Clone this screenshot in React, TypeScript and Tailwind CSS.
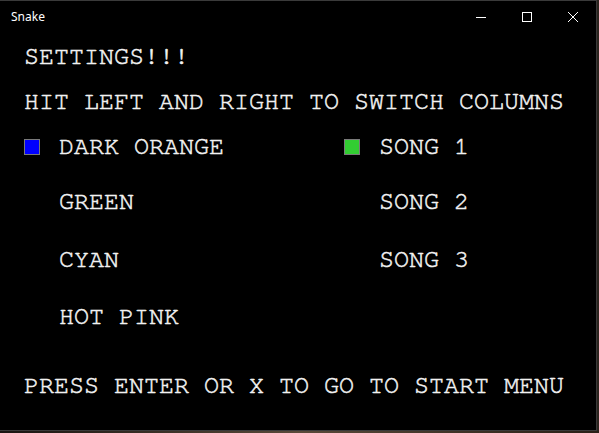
import React from "react";

function Row({ children, className = "" }: { children: React.ReactNode; className?: string }) {
  return (
    <div
      className={`h-[30px] flex items-center whitespace-pre font-['FreeMono','Courier_New',monospace] text-[25px] leading-[30px] text-[#f2f2f2] [-webkit-text-stroke:0.5px_#f2f2f2] ${className}`}
    >
      {children}
    </div>
  );
}

function Item({ label, color, className = "" }: { label: string; color?: string; className?: string }) {
  return (
    <Row className={className}>
      <span className="w-[16px] h-[16px] mr-[19px] shrink-0 flex">
        {color ? <span className={`w-[16px] h-[16px] border border-[#7a7a7a] ${color}`} /> : null}
      </span>
      <span>{label}</span>
    </Row>
  );
}

export default function App() {
  return (
    <div className="w-[599px] h-[433px] bg-[#2b241e] overflow-hidden flex flex-col">
      <div className="w-[597px] h-[431px] bg-black border-t border-r border-b border-[#3a3a3a] flex flex-col">
        <div className="h-[31px] flex items-center shrink-0">
          <span className="pl-[11px] text-[12px] text-white font-['Noto_Sans','Open_Sans',sans-serif]">Snake</span>
          <div className="ml-auto flex h-full">
            <div className="w-[46px] h-full flex items-center justify-center">
              <svg width="10" height="10" viewBox="0 0 10 10">
                <line x1="0" y1="5.5" x2="10" y2="5.5" stroke="white" strokeWidth="1" />
              </svg>
            </div>
            <div className="w-[46px] h-full flex items-center justify-center">
              <svg width="10" height="10" viewBox="0 0 10 10">
                <rect x="0.5" y="0.5" width="9" height="9" fill="none" stroke="white" strokeWidth="1" />
              </svg>
            </div>
            <div className="w-[46px] h-full flex items-center justify-center">
              <svg width="10" height="10" viewBox="0 0 10 10">
                <line x1="0" y1="0" x2="10" y2="10" stroke="white" strokeWidth="1" />
                <line x1="10" y1="0" x2="0" y2="10" stroke="white" strokeWidth="1" />
              </svg>
            </div>
          </div>
        </div>
        <div className="flex flex-col pl-[24px]">
          <Row className="mt-[10px]">SETTINGS!!!</Row>
          <Row className="mt-[15px]">HIT LEFT AND RIGHT TO SWITCH COLUMNS</Row>
          <div className="mt-[15px] flex">
            <div className="w-[320px] flex flex-col">
              <Item label="DARK ORANGE" color="bg-[#0000ff]" />
              <Item label="GREEN" className="mt-[25px]" />
              <Item label="CYAN" className="mt-[28px]" />
              <Item label="HOT PINK" className="mt-[27px]" />
            </div>
            <div className="flex flex-col">
              <Item label="SONG 1" color="bg-[#32cd32]" />
              <Item label="SONG 2" className="mt-[25px]" />
              <Item label="SONG 3" className="mt-[28px]" />
            </div>
          </div>
          <Row className="mt-[39px]">PRESS ENTER OR X TO GO TO START MENU</Row>
        </div>
      </div>
      <div className="flex-1 bg-gradient-to-r from-[#1a1512] via-[#5a4a3a] to-[#2a2018]" />
    </div>
  );
}
